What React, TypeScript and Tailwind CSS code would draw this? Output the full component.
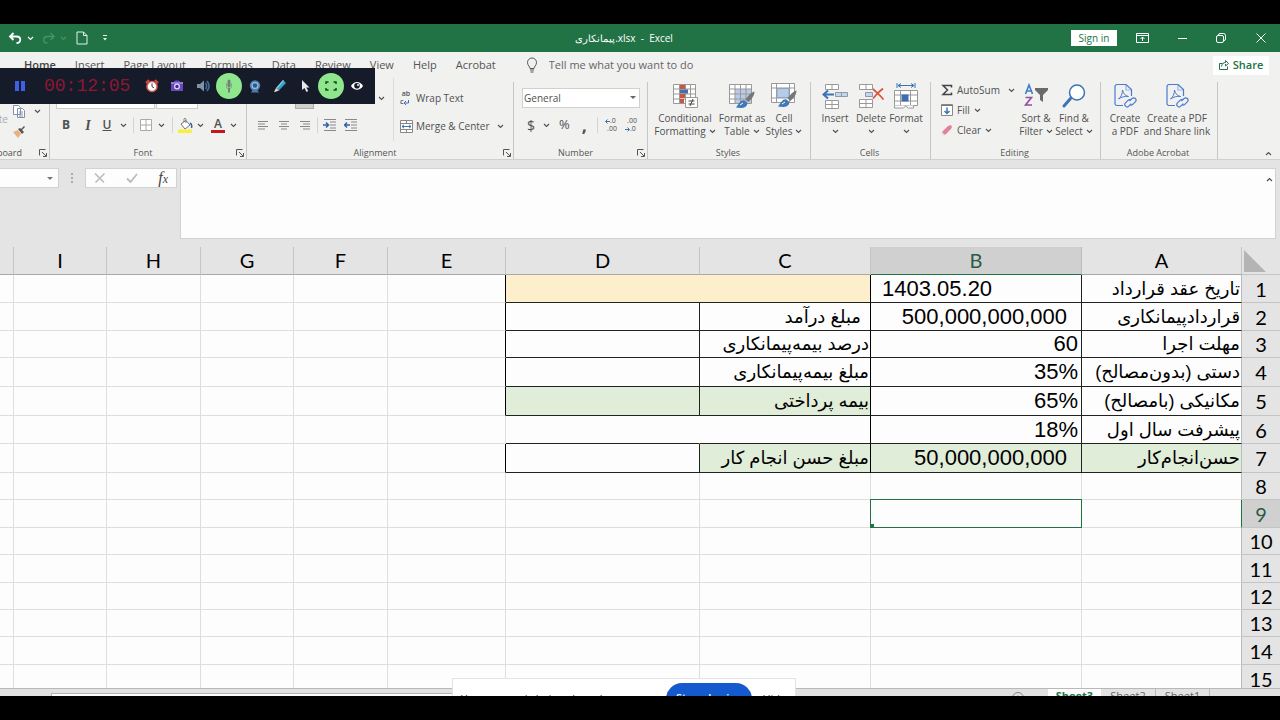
import type { ReactNode } from "react";

const uiFont = "font-['Open_Sans','Noto_Sans',sans-serif]";

function Chevron({ className = "" }: { className?: string }) {
  return (
    <svg viewBox="0 0 7 5" className={`h-[5px] w-[7px] shrink-0 ${className}`} fill="none" stroke="currentColor" strokeWidth="1.1">
      <path d="M1 1l2.5 2.5L6 1" />
    </svg>
  );
}

function Launcher() {
  return (
    <button aria-label="More options" className="shrink-0">
      <svg viewBox="0 0 8 8" className="h-2 w-2" fill="none" stroke="#555" strokeWidth="1">
        <path d="M.5 6.5v-6h6M3 3l4 4M7.5 4v3.5H4" />
      </svg>
    </button>
  );
}

function Group({ label, width, launcher, children }: { label: string; width: string; launcher?: boolean; children: ReactNode }) {
  return (
    <section className={`flex shrink-0 flex-col ${width}`}>
      <div className="flex flex-1">
        <div className="min-w-0 flex-1">{children}</div>
        <div className="mt-1 w-px bg-[#c6c6c6]" />
      </div>
      <div className="flex h-3 items-center border-r border-[#c6c6c6] pr-[2px]">
        <span className="flex-1 text-center text-[9px] leading-3 text-[#555]">{label}</span>
        {launcher && <Launcher />}
      </div>
    </section>
  );
}

function BigButton({ icon, top, bottom, chevron, className = "" }: { icon: ReactNode; top: string; bottom?: string; chevron?: boolean; className?: string }) {
  return (
    <button className={`flex shrink-0 flex-col items-center pt-1 text-[10px] leading-[13px] whitespace-nowrap ${className}`}>
      <span className="mb-[2px] flex h-7 items-center">{icon}</span>
      <span>{top}</span>
      <span className="flex h-[13px] items-center gap-[3px]">
        {bottom}
        {chevron && <Chevron />}
      </span>
    </button>
  );
}

/* Ribbon drawings */

function ConditionalIcon() {
  return (
    <svg viewBox="0 0 26 26" className="h-[26px] w-[26px]" fill="none">
      <path d="M1.5 1.5h22v19h-22zM7.5 1.5v19M13.5 1.5v19M18.5 1.5v19M1.5 6h22M1.5 11h22M1.5 16h22" fill="#fff" stroke="#999" />
      <path d="M8 2h5v4H8zM8 11h5v4H8zM8 16h4v4H8z" fill="#d0533c" />
      <path d="M8 6.500h8v4H8z" fill="#4472a8" />
      <path d="M13.500 14.500h12v10h-12z" fill="#fff" stroke="#999" />
      <path d="M16.500 18h6M16.500 21h6M21 16l-3 7" stroke="#444" />
    </svg>
  );
}

function Brush() {
  return (
    <>
      <path d="M26.500 8.500c-4 1-7 5-9 8l3 2.500c3-3 6-6 6-10.500z" fill="#777" />
      <path d="M16.500 17.500c-4-1-5 3-8.500 7 5 1 11 1 11.500-4.500z" fill="#4179b8" />
      <path d="M12 22l3-2" stroke="#fff" />
    </>
  );
}

function FormatTableIcon() {
  return (
    <svg viewBox="0 0 28 26" className="h-[26px] w-7" fill="none">
      <path d="M1.500 1.500h22v19h-22z" fill="#fff" />
      <path d="M7 6h16.500v14.500H7z" fill="#b9cbe6" />
      <path d="M1.500 1.500h22v19h-22zM7 1.500v19M12.500 1.500v19M18 1.500v19M1.500 6h22M1.500 11h22M1.500 16h22" stroke="#999" />
      <Brush />
    </svg>
  );
}

function CellStylesIcon() {
  return (
    <svg viewBox="0 0 28 28" className="h-7 w-7" fill="none">
      <path d="M1.500 1.500h23v19h-23zM6.500 1.500v19M19.500 1.500v19M1.500 6h23M1.500 16h23" fill="#fff" stroke="#999" />
      <path d="M7 6.500h12v9H7z" fill="#b7cbe4" stroke="#8aa6c8" />
      <Brush />
    </svg>
  );
}

function InsertIcon() {
  return (
    <svg viewBox="0 0 28 28" className="h-7 w-7" fill="none">
      <path d="M4.500 2.500h13v5h-13zM11 2.500v5M4.500 18.500h13v8h-13zM11 18.500v8M4.500 22.500h13" fill="#fff" stroke="#999" />
      <path d="M14.500 10.500h12v4h-12zM20.500 10.500v4" fill="#c6d6ea" stroke="#8b99ab" />
      <path d="M13 12.500H3M7 8.500l-4.500 4L7 16.500" stroke="#3b73b5" strokeWidth="2" />
    </svg>
  );
}

function DeleteIcon() {
  return (
    <svg viewBox="0 0 28 28" className="h-7 w-7" fill="none">
      <path d="M2.500 2.500h13v5h-13zM9 2.500v5M2.500 17.500h13v8h-13zM9 17.500v8M2.500 21.500h13" fill="#fff" stroke="#999" />
      <path d="M8.500 10.500h7v4h-7z" fill="#c6d6ea" stroke="#8b99ab" />
      <path d="M16 7c3 3 7 6 10.500 10.500M26 6.500c-4 3-7 6-10 10" stroke="#d9553f" strokeWidth="1.800" />
    </svg>
  );
}

function FormatIcon() {
  return (
    <svg viewBox="0 0 28 28" className="h-7 w-7" fill="none">
      <path d="M5 1v5M23 1v5M6.500 3.500h15M9 1.500l-3 2 3 2M19 1.500l3 2-3 2" stroke="#3b73b5" />
      <path d="M2.500 8.500h23v15h-23zM8.500 8.500v15M18.500 8.500v15M2.500 13h23M2.500 19h23" fill="#fff" stroke="#999" />
      <path d="M9.500 12.500h7v7h-7z" fill="#3d6eae" />
      <path d="M2.500 23.500v2.500h9l2-2 3 2h5v-2.500" fill="#fff" stroke="#999" />
    </svg>
  );
}

function SortIcon() {
  return (
    <svg viewBox="0 0 26 26" className="h-[26px] w-[26px]" fill="none">
      <path d="M2.500 11L6 2l3.500 9M3.500 8h5" stroke="#3f7cc2" strokeWidth="1.600" />
      <path d="M2.500 14.500h6L2.500 22h6.500" stroke="#8d4f9f" strokeWidth="1.600" />
      <path d="M12 5h13v2l-5 5v7l-3-2v-5l-5-5z" fill="#6b6b6b" />
    </svg>
  );
}

function FindIcon() {
  return (
    <svg viewBox="0 0 26 26" className="h-[26px] w-[26px]" fill="none">
      <path d="M9.500 15.500L3 23" stroke="#3b73b5" strokeWidth="3" strokeLinecap="round" />
      <circle cx="16" cy="9.500" r="7.500" fill="#fff" stroke="#3b73b5" strokeWidth="1.500" />
    </svg>
  );
}

function PdfIcon() {
  return (
    <svg viewBox="0 0 24 26" className="h-[26px] w-6" fill="none" stroke="#4a7bd0" strokeWidth="1.200">
      <path d="M10 22.500H4a2 2 0 01-2-2v-17a2 2 0 012-2h9l5.500 5V13" />
      <path d="M13 1.500V7h5.500" strokeOpacity=".5" />
      <path d="M5.500 16c2.500-2 4-5 4-9 1 4 2.500 5.500 6 6.500-4-.5-7 .5-10 2.500z" strokeWidth="1" />
      <path d="M16.500 18l2.500-2.500a2.300 2.300 0 013.300 3.300L19.800 21.300a2.300 2.300 0 01-3 .2M18.300 20.700L15.800 23.200a2.300 2.300 0 01-3.300-3.300L15 17.400a2.300 2.300 0 013-.2" />
    </svg>
  );
}

function Lines({ d, arrow }: { d: string; arrow?: string }) {
  return (
    <svg viewBox="0 0 14 12" className="h-3 w-[14px]" fill="none">
      <path d={d} stroke="#888" />
      {arrow && <path d={arrow} stroke="#2f62ad" strokeWidth="1.500" />}
    </svg>
  );
}

function TitleBar() {
  return (
    <header className="grid h-7 shrink-0 grid-cols-[1fr_auto_1fr] items-center bg-[#217346] text-[10px] text-white">
      <div className="flex items-center pl-2">
        <button aria-label="Undo">
          <svg viewBox="0 0 14 12" className="h-3 w-[14px]" fill="none" stroke="#fff" strokeWidth="1.800">
            <path d="M5.500 1L2 4.500 5.500 8M2 4.500h6.500c5 0 5 6.500 0 6.500" />
          </svg>
        </button>
        <Chevron className="ml-[5px]" />
        <button aria-label="Redo" className="ml-2 text-[#4b9069]">
          <svg viewBox="0 0 14 12" className="h-3 w-[14px]" fill="none" stroke="currentColor" strokeWidth="1.400">
            <path d="M8.500 1L12 4.500 8.500 8M12 4.500H5.500c-5 0-5 6.500 0 6.500" />
          </svg>
        </button>
        <Chevron className="ml-1 text-[#4b9069]" />
        <button aria-label="New" className="ml-[9px]">
          <svg viewBox="0 0 12 14" className="h-[14px] w-3" fill="none" stroke="#e6f0ea">
            <path d="M1 1h6.500L11 4.500V13H1zM7.500 1v3.500H11" />
          </svg>
        </button>
        <button aria-label="Customize toolbar" className="ml-[14px]">
          <svg viewBox="0 0 6 6" className="h-[6px] w-[6px]" fill="#e6f0ea">
            <path d="M1 0h4v1H1zM1 3h4L3 5.500z" />
          </svg>
        </button>
      </div>
      <h1 className="pr-8 whitespace-pre">{"پیمانکاری.xlsx  -  Excel"}</h1>
      <div className="flex items-center justify-end pr-[14px]">
        <button className="mr-[19px] h-4 w-[46px] bg-white text-[10px] leading-4 text-[#217346]">Sign in</button>
        <button aria-label="Ribbon display options" className="mr-[29px]">
          <svg viewBox="0 0 13 10" className="h-[10px] w-[13px]" fill="none" stroke="#fff">
            <path d="M.5.5h12v9H.5zM.5 2.500h12M6.500 8V4M4.500 6l2-2 2 2" />
          </svg>
        </button>
        <button aria-label="Minimize" className="mr-[29px] h-px w-[9px] bg-white" />
        <button aria-label="Restore" className="mr-[30px]">
          <svg viewBox="0 0 10 10" className="h-[10px] w-[10px]" fill="none" stroke="#fff">
            <rect x=".5" y="2.500" width="7" height="7" rx="1.500" />
            <path d="M2.500 2.500V2A1.500 1.500 0 014 .5h3.500a2 2 0 012 2V6A1.500 1.500 0 018 7.500" />
          </svg>
        </button>
        <button aria-label="Close">
          <svg viewBox="0 0 10 10" className="h-[10px] w-[10px]" fill="none" stroke="#fff">
            <path d="M.5.5l9 9M9.500.5l-9 9" />
          </svg>
        </button>
      </div>
    </header>
  );
}

const tabs = ["Home", "Insert", "Page Layout", "Formulas", "Data", "Review", "View", "Help", "Acrobat"];

function TabRow() {
  return (
    <nav className="flex h-[26px] shrink-0 items-center pl-6 text-[11px] text-[#555]">
      <div className="flex gap-[19px]">
        {tabs.map((tab) => (
          <a key={tab} href="#" className={tab === "Home" ? "font-semibold text-[#444]" : ""}>
            {tab}
          </a>
        ))}
      </div>
      <label className="ml-[30px] flex flex-1 items-center gap-[11px]">
        <svg viewBox="0 0 12 16" className="h-4 w-3" fill="none" stroke="#555">
          <path d="M4 11.500c0-2-2.500-3-2.500-6a4.500 4.500 0 019 0c0 3-2.500 4-2.500 6zM4 13h4M4.500 15h3" />
        </svg>
        <input aria-label="Tell me what you want to do" placeholder="Tell me what you want to do" className="w-48 placeholder:text-[#666]" />
      </label>
      <button className="mr-[11px] flex h-[19px] w-14 items-center justify-center gap-1 bg-white text-[11px] font-semibold text-[#217346]">
        <svg viewBox="0 0 10 10" className="h-[10px] w-[10px]" fill="none" stroke="currentColor">
          <path d="M3.500 3.500h-3v6h8v-3M2.500 6.500c.5-3 2-4 4-4v-2l3 3-3 2.500V4" />
        </svg>
        Share
      </button>
    </nav>
  );
}

function Ribbon() {
  return (
    <div className="flex h-[82px] shrink-0 overflow-hidden border-b border-[#d0d0d0] text-[10px] text-[#505050]">
      {/* Clipboard, partly scrolled out */}
      <section className="flex w-[50px] shrink-0 flex-col items-end overflow-hidden border-r border-[#c6c6c6]">
        <div className="flex flex-1 items-start gap-1 pt-[26px]">
          <span className="mt-2 text-[#aaa]">Paste</span>
          <div className="flex w-[37px] flex-col gap-2">
            <button aria-label="Copy" className="flex items-center gap-2">
              <svg viewBox="0 0 14 14" className="h-[14px] w-[14px]" fill="#fff" stroke="#8190ab">
                <path d="M1.500 1.500h5l2 2v7h-7zM5.500 4.500h5l2 2v7h-7zM7 8h4M7 10h4M7 12h4" />
              </svg>
              <Chevron />
            </button>
            <button aria-label="Format painter">
              <svg viewBox="0 0 14 12" className="h-3 w-[14px]">
                <path d="M1 6l5-2 3 4-3 4z" fill="#e5b47c" />
                <path d="M6 3l4 5 2-2-2-2 3-3-1-1-3 3-1-1z" fill="#555" />
              </svg>
            </button>
          </div>
        </div>
        <div className="flex h-3 items-center gap-[17px] pr-[2px] text-[9px]">
          <span>Clipboard</span>
          <Launcher />
        </div>
      </section>

      <Group label="Font" width="w-[197px]" launcher>
        <div className="flex h-[31px] items-end gap-px pl-[6px]">
          <select aria-label="Font" className="h-5 w-[99px] appearance-none border border-[#ccc] bg-white" />
          <select aria-label="Font size" className="h-5 w-[42px] appearance-none border border-[#ccc] bg-white" />
        </div>
        <div className="flex h-8 items-center pl-[11px] text-[12px]">
          <button className="w-[10px] font-bold">B</button>
          <button className="ml-3 w-[10px] font-['Liberation_Serif',serif] text-[14px] font-bold italic">I</button>
          <button className="ml-[9px] w-[10px] font-semibold underline">U</button>
          <Chevron className="ml-2" />
          <span className="ml-[6px] h-4 w-px bg-[#d4d4d4]" />
          <button aria-label="Borders" className="ml-[6px] flex items-center gap-[6px]">
            <svg viewBox="0 0 12 12" className="h-3 w-3" fill="#fff" stroke="#aaa">
              <path d="M.5.5h11v11H.5zM6 .5v11M.5 6h11" />
            </svg>
            <Chevron />
          </button>
          <span className="ml-[7px] h-4 w-px bg-[#d4d4d4]" />
          <button aria-label="Fill color" className="ml-[5px] flex items-center gap-1">
            <svg viewBox="0 0 15 15" className="h-[15px] w-[15px]" fill="none">
              <path d="M3 6l5-3.500L12 7l-5 4zM6 4V1.500c0-1.500 2-1.500 2 0V5" fill="#fff" stroke="#777" />
              <path d="M12 5c2 1 2 3 1.500 5" stroke="#3b5ea5" strokeWidth="1.500" />
              <path d="M0 11.500h14V15H0z" fill="#f7f13a" />
            </svg>
            <Chevron />
          </button>
          <button aria-label="Font color" className="ml-[7px] flex items-center gap-[5px]">
            <span className="h-4 w-[14px] border-b-[3px] border-[#c8161d] text-center text-[12px] leading-[13px] font-semibold">A</span>
            <Chevron />
          </button>
        </div>
      </Group>

      <Group label="Alignment" width="w-[267px]" launcher>
        <div className="flex">
          <div className="w-[146px]">
            <div className="flex h-[31px] items-end pl-12">
              <button aria-label="Bottom align" className="h-5 w-[19px] border border-[#aaa] bg-[#cfcfcf]" />
              <Chevron className="mb-[8px] ml-16" />
            </div>
            <div className="flex h-8 items-center pl-[10px]">
              <button aria-label="Align left"><Lines d="M1 2.500h10M1 5h7M1 7.500h10M1 10h7" /></button>
              <button aria-label="Center" className="ml-[7px]"><Lines d="M1 2.500h10M3 5h6M1 7.500h10M3 10h6" /></button>
              <button aria-label="Align right" className="ml-[7px]"><Lines d="M1 2.500h10M4 5h7M1 7.500h10M4 10h7" /></button>
              <span className="ml-[4px] h-4 w-px bg-[#d4d4d4]" />
              <button aria-label="Decrease indent" className="ml-[5px]"><Lines d="M1 .5h12M7 3h6M7 6h6M7 9h6M1 11.500h12" arrow="M0 6h5M3 3.500L5.500 6 3 8.500" /></button>
              <button aria-label="Increase indent" className="ml-[7px]"><Lines d="M1 .5h12M7 3h6M7 6h6M7 9h6M1 11.500h12" arrow="M6 6H1M3 3.500L.5 6 3 8.500" /></button>
            </div>
          </div>
          <div className="flex-1 border-l border-[#dadada] pt-[6px] pl-[6px]">
            <button className="flex h-7 items-center gap-1">
              <span className="flex w-3 flex-col text-[7px] leading-[8px] font-semibold">
                <span className="h-2">ab</span>
                <span className="flex h-2 items-center">
                  c
                  <svg viewBox="0 0 6 5" className="h-[5px] w-[6px]" fill="none" stroke="#3b73b5">
                    <path d="M5.500 0v3H1M3 1L1 3l2 2" />
                  </svg>
                </span>
              </span>
              Wrap Text
            </button>
            <button className="flex h-7 items-center gap-[3px] whitespace-nowrap">
              <svg viewBox="0 0 13 13" className="h-[13px] w-[13px]" fill="none">
                <path d="M.5.500h12v12H.5zM.5 3.500h12M.5 9.500h12M6.500.500v3M6.500 9.500v3" fill="#fff" stroke="#888" />
                <path d="M2 6.500h9M4 4.800L2 6.500l2 1.700M9 4.800l2 1.700-2 1.700" stroke="#3b73b5" />
              </svg>
              Merge &amp; Center
              <Chevron className="ml-1" />
            </button>
          </div>
        </div>
      </Group>

      <Group label="Number" width="w-[134px]" launcher>
        <div className="pt-[10px] pl-2">
          <div className="relative w-[118px]">
            <select aria-label="Number format" className="h-5 w-full appearance-none border border-[#d0d0d0] bg-white px-px text-[10px] leading-4">
              <option>General</option>
            </select>
            <span className="pointer-events-none absolute top-2 right-1 border-x-[3px] border-t-[3px] border-x-transparent border-t-[#666]" />
          </div>
          <div className="mt-[7px] flex h-5 items-center pl-[5px] text-[14px]">
            <button aria-label="Currency" className="flex items-center gap-2">$ <Chevron /></button>
            <button className="ml-[9px] text-[13px]">%</button>
            <button aria-label="Comma style" className="ml-3 h-[22px] text-[18px] leading-3 font-bold">,</button>
            <span className="ml-[10px] h-4 w-px bg-[#d4d4d4]" />
            <button aria-label="Increase decimal" className="ml-[7px] flex w-3 flex-col text-[7px] leading-[8px]">
              <span className="flex h-2 items-center">
                <svg viewBox="0 0 5 5" className="h-[5px] w-[5px]" fill="none" stroke="#3b73b5">
                  <path d="M5 2.500H1M2.500.5l-2 2 2 2" />
                </svg>
                .0
              </span>
              <span className="h-2 text-right">.00</span>
            </button>
            <button aria-label="Decrease decimal" className="ml-2 flex w-3 flex-col text-[7px] leading-[8px]">
              <span className="h-2 text-right">.00</span>
              <span className="flex h-2 items-center">
                <svg viewBox="0 0 5 5" className="h-[5px] w-[5px]" fill="none" stroke="#3b73b5">
                  <path d="M0 2.500h4M2.500.5l2 2-2 2" />
                </svg>
                .0
              </span>
            </button>
          </div>
        </div>
      </Group>

      <Group label="Styles" width="w-[163px]">
        <div className="flex pl-[2px]">
          <BigButton icon={<ConditionalIcon />} top="Conditional" bottom="Formatting" chevron className="w-[70px]" />
          <BigButton icon={<FormatTableIcon />} top="Format as" bottom="Table" chevron className="w-[44px]" />
          <BigButton icon={<CellStylesIcon />} top="Cell" bottom="Styles" chevron className="w-10" />
        </div>
      </Group>

      <Group label="Cells" width="w-[120px]">
        <div className="flex pl-[6px]">
          <BigButton icon={<InsertIcon />} top="Insert" chevron className="w-9" />
          <BigButton icon={<DeleteIcon />} top="Delete" chevron className="w-9" />
          <BigButton icon={<FormatIcon />} top="Format" chevron className="w-[34px]" />
        </div>
      </Group>

      <Group label="Editing" width="w-[170px]">
        <div className="flex">
          <div className="flex w-[85px] shrink-0 flex-col pt-[2px] pl-[10px] whitespace-nowrap">
            <button className="flex h-5 items-center gap-1">
              <svg viewBox="0 0 12 12" className="h-3 w-3" fill="none" stroke="#444" strokeWidth="1.500">
                <path d="M10.500 3.500V1.500H2l4.500 4.500L2 10.500h8.500v-2" />
              </svg>
              AutoSum
              <Chevron className="ml-1" />
            </button>
            <button className="flex h-5 items-center gap-1">
              <svg viewBox="0 0 12 12" className="h-3 w-3" fill="none">
                <path d="M.5.5h11v11H.5z" fill="#fff" stroke="#888" />
                <path d="M.5 1.500h11" stroke="#777" />
                <path d="M6 3.500v6M3.500 7L6 9.500 8.500 7" stroke="#3b73b5" strokeWidth="1.500" />
              </svg>
              Fill
              <Chevron />
            </button>
            <button className="flex h-5 items-center gap-1">
              <svg viewBox="0 0 12 12" className="h-3 w-3">
                <path d="M1 8l6-6 3-1 1 2-1 2-6 6z" fill="#e6809a" />
                <path d="M1 8l3 3-1 .5L.5 9z" fill="#f4bccb" />
              </svg>
              Clear
              <Chevron />
            </button>
          </div>
          <BigButton icon={<SortIcon />} top="Sort &" bottom="Filter" chevron className="w-10" />
          <BigButton icon={<FindIcon />} top="Find &" bottom="Select" chevron className="w-9" />
        </div>
      </Group>

      <Group label="Adobe Acrobat" width="w-[117px]">
        <div className="flex pl-2">
          <BigButton icon={<PdfIcon />} top="Create" bottom="a PDF" className="w-8" />
          <BigButton icon={<PdfIcon />} top="Create a PDF" bottom="and Share link" className="w-[72px]" />
        </div>
      </Group>

      <div className="flex flex-1 items-end justify-end pr-2 pb-[3px]">
        <button aria-label="Collapse ribbon">
          <Chevron className="rotate-180" />
        </button>
      </div>
    </div>
  );
}

function FormulaBar() {
  return (
    <div className="flex h-[87px] shrink-0 items-start bg-[#e4e4e4] pt-2 pr-1">
      <div className="flex h-5 w-[59px] items-center justify-end border border-l-0 border-[#d2d2d2] bg-[#fdfdfd] pr-[5px]">
        <span className="border-x-[3px] border-t-[3px] border-x-transparent border-t-[#777]" />
      </div>
      <svg viewBox="0 0 2 12" className="mt-1 ml-3 h-3 w-[2px]" fill="#aaa">
        <path d="M0 1h2v2H0zM0 5h2v2H0zM0 9h2v2H0z" />
      </svg>
      <div className="ml-3 flex h-5 w-[92px] items-center justify-between border border-[#d2d2d2] bg-[#fdfdfd] px-2">
        <button aria-label="Cancel">
          <svg viewBox="0 0 12 10" className="h-[10px] w-3" fill="none" stroke="#bbb" strokeWidth="1.500"><path d="M1 .5l9 9M10.500.5l-9 9" /></svg>
        </button>
        <button aria-label="Enter">
          <svg viewBox="0 0 12 10" className="h-[10px] w-3" fill="none" stroke="#bbb" strokeWidth="1.800"><path d="M1 5.500L4.500 9 11 1" /></svg>
        </button>
        <button aria-label="Insert function" className="font-['Liberation_Serif',serif] text-[16px] leading-4 text-[#444] italic">
          f<span className="text-[12px]">x</span>
        </button>
      </div>
      <div className="ml-[3px] flex h-[71px] flex-1 border border-[#d2d2d2] bg-[#fdfdfd]">
        <textarea aria-label="Formula" className="flex-1 resize-none outline-none" />
        <Chevron className="mt-2 mr-[2px] rotate-180 text-[#444]" />
      </div>
    </div>
  );
}

type Cell = { text?: string; className?: string; span?: number; rtl?: boolean; left?: boolean };
type Row = { height: string; cells?: { d?: Cell; c?: Cell; b: Cell; a: Cell } };

const columns = [
  { name: "", width: "w-auto" },
  { name: "I", width: "w-[93px]" },
  { name: "H", width: "w-[94px]" },
  { name: "G", width: "w-[93px]" },
  { name: "F", width: "w-[94px]" },
  { name: "E", width: "w-[118px]" },
  { name: "D", width: "w-[194px]" },
  { name: "C", width: "w-[171px]" },
  { name: "B", width: "w-[211px]" },
  { name: "A", width: "w-40" },
];

const rows: Row[] = [
  {
    height: "h-7",
    cells: {
      d: { span: 2, className: "bg-[#fdefcb]" },
      b: { text: "1403.05.20", left: true, className: "pl-[11px]" },
      a: { text: "تاریخ عقد قرارداد", rtl: true },
    },
  },
  {
    height: "h-7",
    cells: {
      d: {},
      c: { text: "مبلغ درآمد", rtl: true, className: "pr-[10px]" },
      b: { text: "500,000,000,000", className: "pr-[14px]" },
      a: { text: "قراردادپیمانکاری", rtl: true },
    },
  },
  {
    height: "h-[27px]",
    cells: {
      d: {},
      c: { text: "درصد بیمه‌پیمانکاری", rtl: true, className: "pr-[2px]" },
      b: { text: "60", className: "pr-[3px]" },
      a: { text: "مهلت اجرا", rtl: true },
    },
  },
  {
    height: "h-[29px]",
    cells: {
      d: {},
      c: { text: "مبلغ بیمه‌پیمانکاری", rtl: true, className: "pr-[2px]" },
      b: { text: "35%", className: "pr-[3px]" },
      a: { text: "دستی (بدون‌مصالح)", rtl: true },
    },
  },
  {
    height: "h-[29px]",
    cells: {
      d: { className: "bg-[#e0edd9]" },
      c: { text: "بیمه پرداختی", rtl: true, className: "bg-[#e0edd9] pr-[2px]" },
      b: { text: "65%", className: "pr-[3px]" },
      a: { text: "مکانیکی (بامصالح)", rtl: true },
    },
  },
  {
    height: "h-7",
    cells: {
      d: {},
      c: {},
      b: { text: "18%", className: "pr-[3px]" },
      a: { text: "پیشرفت سال اول", rtl: true },
    },
  },
  {
    height: "h-[29px]",
    cells: {
      d: {},
      c: { text: "مبلغ حسن انجام کار", rtl: true, className: "bg-[#e0edd9] pr-[2px]" },
      b: { text: "50,000,000,000", className: "bg-[#e0edd9] pr-[14px]" },
      a: { text: "حسن‌انجام‌کار", rtl: true, className: "bg-[#e0edd9]" },
    },
  },
  { height: "h-[27px]" },
  { height: "h-7" },
  { height: "h-[27px]" },
  { height: "h-7" },
  { height: "h-[27px]" },
  { height: "h-[27px]" },
  { height: "h-7" },
  { height: "h-7" },
];

function DataCell({ cell, edge = "border-r-[#222]", pad = "" }: { cell: Cell; edge?: string; pad?: string }) {
  const align = cell.rtl ? "text-start text-[18px]" : cell.left ? "text-left text-[22px]" : "text-right text-[22px]";
  return (
    <td
      colSpan={cell.span}
      dir={cell.rtl ? "rtl" : undefined}
      className={`border-r border-b border-b-[#222] py-0 whitespace-nowrap ${edge} ${pad} ${align} ${cell.className ?? ""}`}
    >
      <div className="h-[26px] leading-[26px]">{cell.text}</div>
    </td>
  );
}

function Sheet() {
  const blank = "border-r border-b border-[#dedede] p-0";
  return (
    <div className="min-h-0 flex-1 overflow-hidden bg-[#fdfdfd]">
      <table className="w-full table-fixed border-separate border-spacing-0 font-['Liberation_Sans','DejaVu_Sans',sans-serif] text-black">
        <thead className="font-['Lato','Open_Sans',sans-serif]">
          <tr className="h-7 bg-[#e4e4e4] text-[20px]">
            {columns.map((col) => (
              <th
                key={col.name}
                scope="col"
                className={`border-r border-b p-0 font-normal ${col.width} ${
                  col.name === "B" ? "border-r-[#bbb] border-b-[#217346] bg-[#d0d0d0] text-[#2c5b45]" : "border-r-[#c4c4c4] border-b-[#a9a9a9]"
                }`}
              >
                <div className="h-[27px] leading-[27px]">{col.name}</div>
              </th>
            ))}
            <th className="w-[38px] border-b border-[#c4c4c4] p-0">
              <svg viewBox="0 0 22 22" className="ml-[2px] h-[22px] w-[22px]" fill="#b4b4b4">
                <path d="M0 0v22h22z" />
              </svg>
            </th>
          </tr>
        </thead>
        <tbody>
          {rows.map((row, i) => {
            const n = i + 1;
            const framed = row.cells && n !== 6;
            return (
              <tr key={n} className={row.height}>
                {columns.slice(0, 5).map((col) => (
                  <td key={col.name} className={blank} />
                ))}
                <td className={`border-r border-b border-b-[#dedede] p-0 ${framed ? "border-r-black" : "border-r-[#dedede]"}`} />
                {row.cells ? (
                  <>
                    {row.cells.d && (
                      <DataCell cell={row.cells.d} edge={row.cells.d.span ? "border-r-black" : n === 6 ? "border-r-transparent" : "border-r-[#222]"} />
                    )}
                    {row.cells.c && <DataCell cell={row.cells.c} edge="border-r-black" />}
                    <DataCell cell={row.cells.b} />
                    <DataCell cell={row.cells.a} edge="border-r-[#bbb]" pad="pr-[2px]" />
                  </>
                ) : (
                  <>
                    <td className={blank} />
                    <td className={blank} />
                    <td className={`relative ${blank}`}>
                      {n === 9 && (
                        <div className="absolute -inset-px border border-[#217346]">
                          <span className="absolute -bottom-px -left-px h-1 w-1 bg-[#217346]" />
                        </div>
                      )}
                    </td>
                    <td className={`border-r border-b border-b-[#dedede] p-0 ${n === 9 ? "border-r-[#217346]" : "border-r-[#bbb]"}`} />
                  </>
                )}
                <th
                  scope="row"
                  className={`border-b border-[#c4c4c4] p-0 font-['Lato','Open_Sans',sans-serif] text-[20px] font-normal ${
                    n === 9 ? "bg-[#d0d0d0] text-[#2c5b45]" : "bg-[#e4e4e4]"
                  }`}
                >
                  <div className="h-[26px] leading-[26px]">{n}</div>
                </th>
              </tr>
            );
          })}
        </tbody>
      </table>
    </div>
  );
}

function SheetTabs() {
  return (
    <footer className="flex h-2 shrink-0 items-start overflow-hidden border-t border-[#b8b8b8] bg-[#e2e2e2] text-[11px] leading-3 text-[#666]">
      <div className="mt-1 ml-[51px] h-[14px] w-[700px] shrink border border-[#b5b5b5] bg-[#fdfdfd]" />
      <div className="flex-1" />
      <button aria-label="New sheet" className="mt-[3px] mr-6 shrink-0">
        <svg viewBox="0 0 12 12" className="h-3 w-3" fill="none" stroke="#888">
          <path d="M6 .5a5.500 5.500 0 100 11 5.500 5.500 0 000-11zM6 3.500v5M3.500 6h5" />
        </svg>
      </button>
      <button className="h-[14px] w-[53px] shrink-0 bg-[#fdfdfd] font-bold text-[#217346]">Sheet3</button>
      <button className="h-[14px] w-[55px] shrink-0 border-r border-[#b8b8b8]">Sheet2</button>
      <button className="mr-[70px] h-[14px] w-[54px] shrink-0 border-r border-[#b8b8b8]">Sheet1</button>
    </footer>
  );
}

function RecorderBar() {
  const item = "flex h-[26px] flex-1 items-center justify-center";
  return (
    <div className="absolute top-11 left-0 flex h-9 w-[375px] items-center bg-[#151b28] pr-[5px]">
      <button aria-label="Pause" className="ml-[15px] flex gap-[2px]">
        <span className="h-[10px] w-1 bg-[#3f5fe8]" />
        <span className="h-[10px] w-1 bg-[#3f5fe8]" />
      </button>
      <time className="ml-[19px] w-[95px] font-['Liberation_Mono',monospace] text-[18px] text-[#8c1735]">00:12:05</time>
      <button aria-label="Timer" className={item}>
        <svg viewBox="0 0 14 14" className="h-[14px] w-[14px]" fill="none">
          <path d="M1 4l3-3M13 4l-3-3" stroke="#d8453e" strokeWidth="2" />
          <circle cx="7" cy="7.500" r="5" fill="#fff" stroke="#d9605a" strokeWidth="1.500" />
          <path d="M7 4.500v3l2 1.500" stroke="#333" />
        </svg>
      </button>
      <button aria-label="Screenshot" className={item}>
        <svg viewBox="0 0 14 12" className="h-3 w-[14px]">
          <path d="M1 2h3l1-1.500h4L10 2h3v9H1z" fill="#6a45c4" />
          <path d="M1 2h12v2H1z" fill="#8f79da" />
          <circle cx="7" cy="6.500" r="3" fill="#ddd8f3" />
          <circle cx="7" cy="6.500" r="1.700" fill="#3d2b8a" />
        </svg>
      </button>
      <button aria-label="Sound" className={item}>
        <svg viewBox="0 0 14 12" className="h-3 w-[14px]" fill="none">
          <path d="M1 4h3l4-3.500v11L4 8H1z" fill="#7e92a8" />
          <path d="M9.500 3c1.500 1.500 1.500 4.500 0 6M11 1c2.500 3 2.500 7 0 10" stroke="#3f6f9d" strokeWidth="1.600" />
        </svg>
      </button>
      <button aria-label="Microphone" className={item}>
        <span className="flex h-[26px] w-[26px] shrink-0 items-center justify-center rounded-full bg-[#8ee78c]">
          <svg viewBox="0 0 8 14" className="h-[14px] w-2" fill="none">
            <path d="M1.500 4.500v3c0 3 5 3 5 0v-3" stroke="#8d9b90" />
            <rect x="2.500" y=".5" width="3" height="8" rx="1.500" fill="#777f7a" />
            <path d="M4 9v4.500" stroke="#777f7a" strokeWidth="2" />
          </svg>
        </span>
      </button>
      <button aria-label="Webcam" className={item}>
        <svg viewBox="0 0 12 13" className="h-[13px] w-3">
          <path d="M2 12.500l2-3h4l2 3z" fill="#527ba8" />
          <circle cx="6" cy="5.500" r="5.200" fill="#4d80b4" />
          <circle cx="6" cy="5.500" r="3.500" fill="#9cc0dd" />
          <circle cx="6" cy="5.500" r="2.300" fill="#285a90" />
        </svg>
      </button>
      <button aria-label="Draw" className={item}>
        <svg viewBox="0 0 12 12" className="h-3 w-3">
          <path d="M9 0l3 3-7 7.500L2 8z" fill="#35a0c4" />
          <path d="M2 8l3 2.500L1 12H0z" fill="#e9d9c2" />
          <path d="M9 0l1 1-7 8-1-1z" fill="#80c9de" />
        </svg>
      </button>
      <button aria-label="Cursor" className={item}>
        <svg viewBox="0 0 8 12" className="h-3 w-2" fill="#e8e8ee">
          <path d="M0 0v10l2.500-2L4.500 12l1.700-1-2-3.500H7.500z" />
        </svg>
      </button>
      <button aria-label="Capture area" className={item}>
        <span className="flex h-[26px] w-[26px] shrink-0 items-center justify-center rounded-full bg-[#8ee78c]">
          <svg viewBox="0 0 12 10" className="h-[10px] w-3" fill="none" stroke="#1e4022" strokeWidth="1.500">
            <path d="M1 3V1h2.500M8.500 1H11v2M11 7v2H8.500M3.500 9H1V7" />
          </svg>
        </span>
      </button>
      <button aria-label="Preview" className={item}>
        <svg viewBox="0 0 12 10" className="h-[10px] w-3">
          <path d="M0 5c3-5.500 9-5.500 12 0-3 5-9 5-12 0z" fill="#fff" />
          <circle cx="6" cy="4.800" r="2.800" fill="#151b28" />
          <circle cx="7" cy="4" r="1" fill="#fff" />
        </svg>
      </button>
    </div>
  );
}

function SharingNotice() {
  return (
    <div className="absolute bottom-0 left-[452px] flex h-[18px] w-[344px] items-start overflow-hidden border border-b-0 border-[#e4e4e4] bg-white text-[11px] text-[#333]">
      <p className="mt-[13px] ml-2 w-[205px] leading-[14px] whitespace-nowrap">Your screen is being shared</p>
      <button className="mt-1 shrink-0 rounded-2xl bg-[#1559cf] px-[10px] pt-2 pb-3 text-[11px] leading-[14px] font-semibold text-white">Stop sharing</button>
      <button className="mt-[13px] ml-[10px] leading-[14px]">Hide</button>
    </div>
  );
}

export default function App() {
  return (
    <div className={`flex h-screen flex-col bg-black py-6 ${uiFont}`}>
      <main className="relative flex min-h-0 flex-1 flex-col overflow-hidden bg-[#f1f1f0]">
        <TitleBar />
        <TabRow />
        <Ribbon />
        <FormulaBar />
        <Sheet />
        <SheetTabs />
        <RecorderBar />
        <SharingNotice />
      </main>
    </div>
  );
}
